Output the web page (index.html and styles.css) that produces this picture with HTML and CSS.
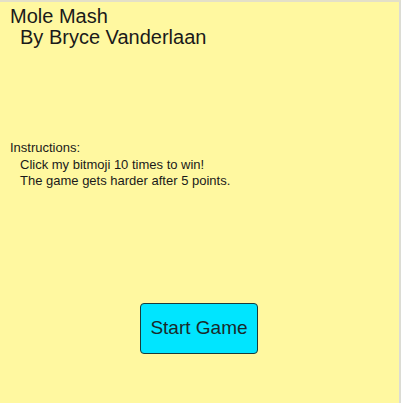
FILE: index.html
```html
<!DOCTYPE html>
<html>
<head>
<meta charset="utf-8">
<link rel="stylesheet" href="styles.css">
</head>
<body>
<div class="screen">
  <div class="title">
    <div class="title-line">Mole Mash</div>
    <div class="title-line indent">By Bryce Vanderlaan</div>
  </div>
  <div class="instructions">
    <div>Instructions:</div>
    <div class="indent">Click my bitmoji 10 times to win!</div>
    <div class="indent">The game gets harder after 5 points.</div>
  </div>
  <div class="actions">
    <button class="start">Start Game</button>
  </div>
</div>
</body>
</html>
```

FILE: styles.css
```css
html, body {
  margin: 0;
  padding: 0;
  background: #ffffff;
}
.screen {
  box-sizing: border-box;
  width: 401px;
  height: 403px;
  background: #fff8a0;
  border-top: 2px solid #e4e0c8;
  border-right: 2px solid #dcdcd4;
  font-family: "Liberation Sans", Arial, sans-serif;
  color: #1a1a1a;
  display: flex;
  flex-direction: column;
}
.title {
  padding: 4px 0 0 10px;
  font-size: 20px;
  line-height: 21px;
}
.title .indent {
  padding-left: 10px;
}
.instructions {
  margin-top: 92px;
  padding-left: 10px;
  font-size: 13px;
  line-height: 16.5px;
}
.instructions .indent {
  padding-left: 10px;
}
.actions {
  margin-top: 113px;
  padding-left: 140px;
}
.start {
  box-sizing: border-box;
  width: 118px;
  height: 51px;
  background: #00e5ff;
  border: 1px solid #1a3a3a;
  border-radius: 4px;
  font-family: "Liberation Sans", Arial, sans-serif;
  font-size: 19px;
  color: #1a2a2a;
  padding: 0;
}
```
